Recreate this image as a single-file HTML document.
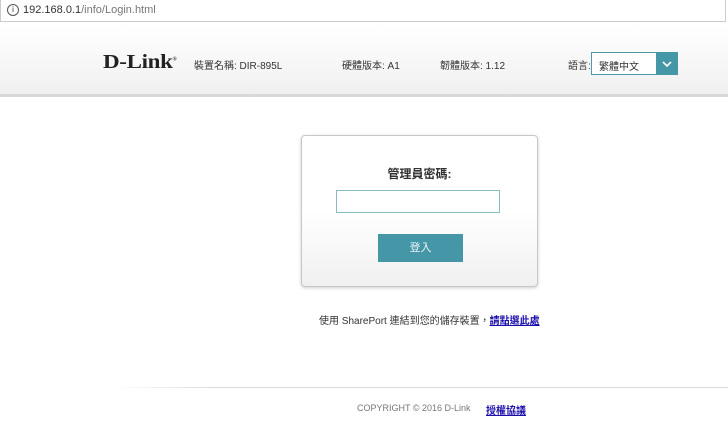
<!DOCTYPE html>
<html><head><meta charset="utf-8"><style>
body{margin:0;width:728px;height:424px;background:#fff;font-family:"Liberation Sans","Noto Sans CJK TC",sans-serif;position:relative;overflow:hidden;font-size:10px;color:#333}
.abs{position:absolute}
.url{left:0;top:0;width:724px;height:21px;border:1px solid #ccc;border-top:none;background:#fff;font-size:11px;color:#333}
.hdr{left:0;top:25px;width:728px;height:69px;background:linear-gradient(#fff,#f0f0f0);border-bottom:3px solid #d8d8d8}
</style></head><body>
<div class="abs url"><span class="abs" style="left:6px;top:4px;width:10px;height:10px;border:1px solid #555;border-radius:50%;font-size:8px;line-height:10px;text-align:center">i</span><span class="abs" style="left:22px;top:4px">192.168.0.1<span style="color:#777">/info/Login.html</span></span></div>
<div class="abs hdr">
<div class="abs" style="left:103px;top:26px;font-family:'Liberation Serif',serif;font-weight:bold;font-size:20px;color:#222;transform:scaleX(1.15);transform-origin:left;letter-spacing:-0.3px">D-Link<sup style="font-size:5px">®</sup></div>
<div class="abs" style="left:194px;top:32px">裝置名稱: DIR-895L</div>
<div class="abs" style="left:342px;top:32px">硬體版本: A1</div>
<div class="abs" style="left:440px;top:32px">韌體版本: 1.12</div>
<div class="abs" style="left:568px;top:32px">語言:</div>
<div class="abs" style="left:591px;top:27px;width:64px;height:21px;border:1px solid #4a9aaa;background:#fff"><span class="abs" style="left:7px;top:5px">繁體中文</span></div>
<div class="abs" style="left:656px;top:27px;width:22px;height:23px;background:#4596a7"><svg width="22" height="23"><path d="M7 10l4 4 4-4" stroke="#fff" stroke-width="1.6" fill="none"/></svg></div>
</div>
<div class="abs" style="left:301px;top:135px;width:235px;height:150px;border:1px solid #c8c8c8;border-radius:4px;background:linear-gradient(#fff 50%,#f0f0f0);box-shadow:0 1px 3px rgba(0,0,0,.2)">
<div class="abs" style="left:0;width:235px;top:29px;text-align:center;font-size:12px;font-weight:bold;color:#333">管理員密碼:</div>
<div class="abs" style="left:34px;top:54px;width:162px;height:21px;border:1px solid #8abcc6;background:#fff"></div>
<div class="abs" style="left:76px;top:98px;width:85px;height:28px;background:#4596a7;color:#e8f4f6;font-size:11px;text-align:center;line-height:28px">登入</div>
</div>
<div class="abs" style="left:319px;top:312px">使用 SharePort 連結到您的儲存裝置，<a style="color:#1a0dab;text-decoration:underline;font-weight:bold">請點選此處</a></div>
<div class="abs" style="left:115px;top:387px;width:613px;height:1px;background:linear-gradient(90deg,#fff,#ddd 15%,#ddd)"></div>
<div class="abs" style="left:357px;top:403px;color:#777;font-size:9px">COPYRIGHT © 2016 D-Link</div>
<div class="abs" style="left:486px;top:402px;color:#1a0dab;text-decoration:underline;font-weight:bold">授權協議</div>
</body></html>
